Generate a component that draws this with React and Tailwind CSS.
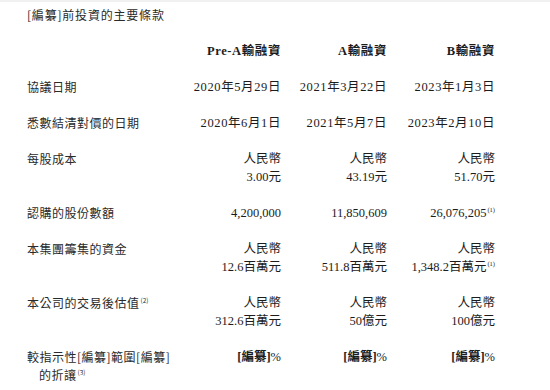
import React from "react";

const LBL = "font-['Noto_Sans_CJK_TC','Noto_Sans_CJK_SC',sans-serif] text-[12px] tracking-[0.5px] text-[#2a2a2a]";
const VAL = "font-['Liberation_Serif','Noto_Sans_CJK_TC',serif] text-[12.5px] text-right text-[#1c1c1c]";
const GRID = "grid grid-cols-[147px_107px_106px_108px] leading-[18px]";

function Sup({ n }) {
  return (
    <span className="inline-block align-top leading-none text-[6.5px] relative top-[3px] ml-[1px] tracking-normal">
      ({n})
    </span>
  );
}

function Row({ label, label2, cols, dateRow }) {
  return (
    <div className={GRID}>
      <div className={LBL}>
        <div>{label}</div>
        {label2 && <div className="pl-[12px]">{label2}</div>}
      </div>
      {cols.map((c, i) => (
        <div key={i} className={VAL + (dateRow ? " tracking-[0.6px]" : "")}>
          {Array.isArray(c) ? c.map((l, j) => <div key={j}>{l}</div>) : c}
        </div>
      ))}
    </div>
  );
}

export default function App() {
  return (
    <div className="w-[550px] h-[390px] bg-white border-t-2 border-[#f1f1f1] pl-[27px] pt-[4px] flex flex-col gap-[18px] overflow-hidden">
      <div className={LBL + " leading-[18px] tracking-[0.8px]"}>[編纂]前投資的主要條款</div>

      <div className={GRID}>
        <div />
        {["Pre-A輸融資", "A輸融資", "B輸融資"].map((h) => (
          <div key={h} className={VAL + " font-bold tracking-[0.6px]"}>{h}</div>
        ))}
      </div>

      <Row label="協議日期" dateRow cols={["2020年5月29日", "2021年3月22日", "2023年1月3日"]} />
      <Row label="悉數結清對價的日期" dateRow cols={["2020年6月1日", "2021年5月7日", "2023年2月10日"]} />
      <Row
        label="每股成本"
        cols={[["人民幣", "3.00元"], ["人民幣", "43.19元"], ["人民幣", "51.70元"]]}
      />
      <Row
        label="認購的股份數額"
        cols={["4,200,000", "11,850,609", <span>26,076,205<Sup n={1} /></span>]}
      />
      <Row
        label="本集團籌集的資金"
        cols={[
          ["人民幣", "12.6百萬元"],
          ["人民幣", "511.8百萬元"],
          ["人民幣", <span>1,348.2百萬元<Sup n={1} /></span>],
        ]}
      />
      <Row
        label={<span>本公司的交易後估值<Sup n={2} /></span>}
        cols={[["人民幣", "312.6百萬元"], ["人民幣", "50億元"], ["人民幣", "100億元"]]}
      />
      <Row
        label="較指示性[編纂]範圍[編纂]"
        label2={<span>的折讓<Sup n={3} /></span>}
        cols={[
          <span><span className="font-bold">[編纂]</span>%</span>,
          <span><span className="font-bold">[編纂]</span>%</span>,
          <span><span className="font-bold">[編纂]</span>%</span>,
        ]}
      />
    </div>
  );
}
